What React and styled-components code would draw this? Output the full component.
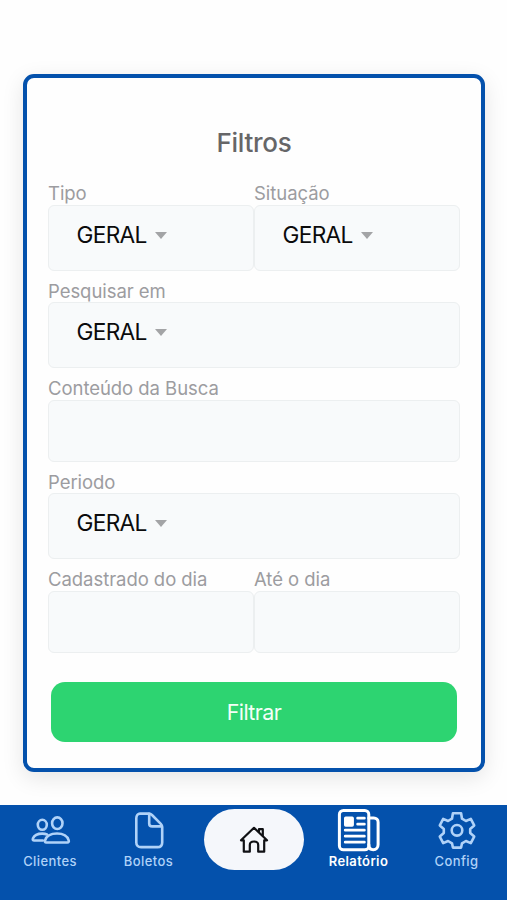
import React from 'react';
import styled, { createGlobalStyle } from 'styled-components';

const GlobalStyle = createGlobalStyle`
  * {
    box-sizing: border-box;
  }

  body {
    margin: 0;
    background: #fefefe;
    font-family: Inter, "Liberation Sans", sans-serif;
  }
`;

const Screen = styled.div`
  display: flex;
  flex-direction: column;
  height: 900px;
  overflow: hidden;
`;

const Content = styled.main`
  flex: 1;
  padding: 74px 22px 0 23px;
`;

const Card = styled.form`
  height: 698px;
  padding: 48px 22px 0;
  border: 4px solid #0451ac;
  border-radius: 11px;
  background: #fefefe;
  box-shadow: 0 6px 22px rgba(0, 0, 0, 0.1);
`;

const Title = styled.h1`
  margin: 0 0 20px;
  font-size: 26px;
  font-weight: 500;
  line-height: 34px;
  letter-spacing: -0.3px;
  text-align: center;
  color: #666668;
`;

const Row = styled.div`
  display: flex;
  margin: 0 -1px 7px;
`;

const Field = styled.div`
  flex: 1;
`;

const Label = styled.label`
  display: block;
  height: 24.7px;
  font-size: 18.5px;
  line-height: 26px;
  letter-spacing: -0.05px;
  white-space: nowrap;
  color: #9c9ca0;
`;

const Box = styled.div`
  display: flex;
  align-items: center;
  height: ${props => props.$select ? '66px' : '61.6px'};
  padding: 0 0 6px 28px;
  border: 1px solid #eceff0;
  border-radius: 6px;
  background: #f8fafb;
`;

const Value = styled.span`
  margin-left: -0.5px;
  font-size: 22.7px;
  line-height: 28px;
  letter-spacing: -0.7px;
  color: #0b0b0c;
`;

const Caret = styled.span`
  width: 0;
  height: 0;
  margin: 1px 0 0 8.5px;
  border-left: 6.5px solid transparent;
  border-right: 6.5px solid transparent;
  border-top: 7px solid #a3a4a6;
`;

const FilterButton = styled.button`
  display: block;
  width: 406px;
  height: 60.5px;
  margin: 29px auto 0;
  padding: 1px 0 0;
  border: 0;
  border-radius: 14px;
  background: #2dd471;
  color: #f4fff8;
  font-family: inherit;
  font-size: 21.5px;
  font-weight: 400;
  letter-spacing: -0.6px;
`;

const Nav = styled.nav`
  display: grid;
  grid-template-columns: 100px 97px 114px 95px 101px;
  height: 95px;
  background: #0451ac;
`;

const NavItem = styled.a`
  display: flex;
  flex-direction: column;
  align-items: center;
  padding-top: 3px;
  font-size: 13px;
  font-weight: ${props => props.$active ? 600 : 500};
  line-height: 19px;
  letter-spacing: 0.4px;
  color: ${props => props.$active ? '#ffffff' : '#b0d2f8'};
`;

const NavIcon = styled.svg`
  width: 44px;
  height: 44px;
  flex: none;
  fill: none;
  stroke: currentColor;
  stroke-width: ${props => props.$weight || 2.6};
  stroke-linecap: round;
  stroke-linejoin: round;
`;

const HomeButton = styled.a`
  display: flex;
  align-items: center;
  justify-content: center;
  width: 100px;
  height: 61px;
  margin: 4px 0 0 7px;
  border-radius: 31px;
  background: #f5f7fb;
  color: #101114;
`;

function SelectField(props) {
  return (
    <Field>
      <Label>{props.label}</Label>
      <Box $select>
        <Value>GERAL</Value>
        <Caret />
      </Box>
    </Field>
  );
}

function InputField(props) {
  return (
    <Field>
      <Label>{props.label}</Label>
      <Box />
    </Field>
  );
}

function PeopleIcon() {
  return (
    <NavIcon viewBox="0 0 44 44">
      <ellipse cx="29.3" cy="15.2" rx="5.2" ry="5.8" />
      <path d="M18.3 34.5H39.2c1.4 0 1.9-1 1.5-2.2-1.4-4.5-6.2-6.8-11.7-6.8s-10.5 2.3-11.9 6.8c-.4 1.2-.1 2.2 1.2 2.2Z" />
      <ellipse cx="14.3" cy="16.8" rx="4.5" ry="5" />
      <path d="M14.8 32.5H6.2c-1.2 0-1.7-.8-1.3-1.9 1.3-3.3 4.9-5 9.4-5 1.8 0 3.4.3 4.7.9" />
    </NavIcon>
  );
}

function DocumentIcon() {
  return (
    <NavIcon viewBox="0 0 44 44">
      <path d="M13 5.6h8.8c1.4 0 2.2.4 3.2 1.4l8.8 8.8c1 1 1.4 1.8 1.4 3.2v15.4c0 3-1.7 4.7-4.7 4.7H14c-3 0-4.7-1.7-4.7-4.7V10.3c0-3 1.7-4.7 3.7-4.7Z" />
      <path d="M22.2 5.8v9.6c0 2 1 3 3 3h9.6" />
    </NavIcon>
  );
}

function HomeIcon() {
  return (
    <NavIcon viewBox="0 0 44 44" $weight={2.2}>
      <path d="M9 22.3 22 9.8l13 12.5h-2.8v11.4h-6V27c0-2-1.5-3.5-4.2-3.5s-4.2 1.5-4.2 3.5v6.7h-6V22.3Z" />
      <path d="M27 13.2v-2h3.8v6.2" />
    </NavIcon>
  );
}

function NewsIcon() {
  return (
    <NavIcon viewBox="0 0 44 44" $weight={3}>
      <rect x="2.4" y="2.5" width="29.4" height="39.3" rx="4" />
      <path d="M31.8 10h5c2.5 0 4.3 1.7 4.3 4.2v22.3c0 3.2-1.9 5.3-4.8 5.3s-4.5-2.1-4.5-5.3" />
      <rect x="7.7" y="9.2" width="8.5" height="8.8" rx="1" fill="currentColor" strokeWidth="1.4" />
      <path d="M20.6 10.2h6.8M20.6 16.2h6.8M8.2 22.2h19.2M8.2 28.2h19.2M8.2 34.2h19.2" strokeWidth="2.7" />
    </NavIcon>
  );
}

function GearIcon() {
  return (
    <NavIcon viewBox="0 0 44 44">
      <path d="M17.9 5.3h8.2l.9 5.4 3.9 2.3 4.9-2.1 3.4 6.5-4 3.5v4.2l4 3.5-3.4 6.5-4.9-2.1-3.9 2.3-.9 4.3h-8.2L17 35.3 13.1 33l-4.9 2.1-3.4-6.5 4-3.5v-4.2l-4-3.5 3.4-6.5 4.9 2.1 3.9-2.3Z" />
      <circle cx="22" cy="22.3" r="5.3" />
    </NavIcon>
  );
}

function App() {
  return (
    <Screen>
      <GlobalStyle />
      <Content>
        <Card>
          <Title>Filtros</Title>
          <Row>
            <SelectField label="Tipo" />
            <SelectField label="Situação" />
          </Row>
          <Row>
            <SelectField label="Pesquisar em" />
          </Row>
          <Row>
            <InputField label="Conteúdo da Busca" />
          </Row>
          <Row>
            <SelectField label="Periodo" />
          </Row>
          <Row>
            <InputField label="Cadastrado do dia" />
            <InputField label="Até o dia" />
          </Row>
          <FilterButton type="button">Filtrar</FilterButton>
        </Card>
      </Content>
      <Nav>
        <NavItem><PeopleIcon />Clientes</NavItem>
        <NavItem><DocumentIcon />Boletos</NavItem>
        <HomeButton><HomeIcon /></HomeButton>
        <NavItem $active><NewsIcon />Relatório</NavItem>
        <NavItem><GearIcon />Config</NavItem>
      </Nav>
    </Screen>
  );
}

export default App;
